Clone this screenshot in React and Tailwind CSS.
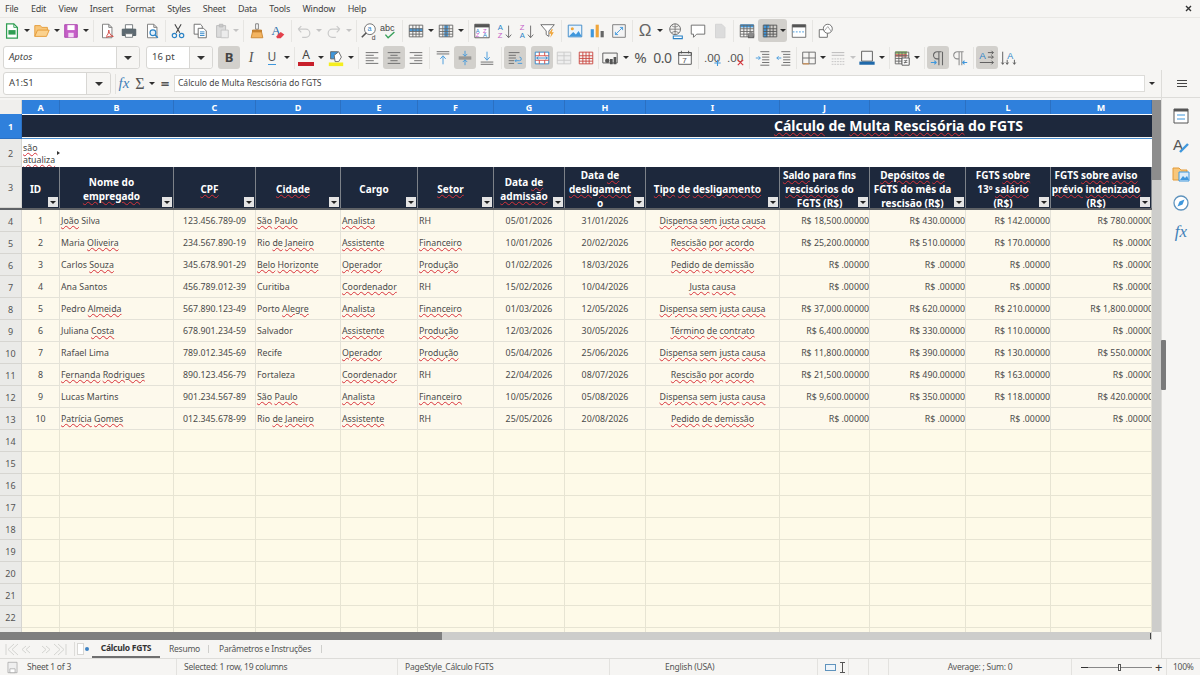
import { Fragment } from "react";

const GRID = "grid grid-cols-[22px_38px_114px_82px_85px_77px_76px_71px_81px_134px_90px_96px_85px_101px]";
const WAVY = "underline decoration-wavy decoration-[#d8323a] decoration-1 underline-offset-1";

const MENUS = ["File", "Edit", "View", "Insert", "Format", "Styles", "Sheet", "Data", "Tools", "Window", "Help"];
const COLS = ["A", "B", "C", "D", "E", "F", "G", "H", "I", "J", "K", "L", "M"];

const HEADERS = [
  ["ID"],
  ["Nome do", "~empregado"],
  ["~CPF"],
  ["~Cidade"],
  ["Cargo"],
  ["~Setor"],
  ["Data ~de", "~admissão"],
  ["Data ~de", "~desligament", "o"],
  ["~Tipo ~de ~desligamento"],
  ["~Saldo para fins", "~rescisórios do", "FGTS (R$)"],
  ["~Depósitos ~de", "FGTS do mês da", "~rescisão (R$)"],
  ["FGTS ~sobre", "13º ~salário", "(R$)"],
  ["FGTS ~sobre ~aviso", "~prévio ~indenizado", "(R$)"],
];

const ROWS = [
  [1, "~João Silva", "123.456.789-09", "~São ~Paulo", "~Analista", "RH", "05/01/2026", "31/01/2026", "~Dispensa ~sem ~justa ~causa", "18,500", "430", "142", "780"],
  [2, "Maria ~Oliveira", "234.567.890-19", "Rio ~de ~Janeiro", "~Assistente", "~Financeiro", "10/01/2026", "20/02/2026", "~Rescisão ~por ~acordo", "25,200", "510", "170", ""],
  [3, "Carlos ~Souza", "345.678.901-29", "~Belo ~Horizonte", "~Operador", "~Produção", "01/02/2026", "18/03/2026", "~Pedido ~de ~demissão", "", "", "", ""],
  [4, "Ana Santos", "456.789.012-39", "Curitiba", "~Coordenador", "RH", "15/02/2026", "10/04/2026", "~Justa ~causa", "", "", "", ""],
  [5, "Pedro ~Almeida", "567.890.123-49", "Porto ~Alegre", "~Analista", "~Financeiro", "01/03/2026", "12/05/2026", "~Dispensa ~sem ~justa ~causa", "37,000", "620", "210", "1,800"],
  [6, "Juliana ~Costa", "678.901.234-59", "Salvador", "~Assistente", "~Produção", "12/03/2026", "30/05/2026", "~Término ~de ~contrato", "6,400", "330", "110", ""],
  [7, "Rafael Lima", "789.012.345-69", "Recife", "~Operador", "~Produção", "05/04/2026", "25/06/2026", "~Dispensa ~sem ~justa ~causa", "11,800", "390", "130", "550"],
  [8, "~Fernanda ~Rodrigues", "890.123.456-79", "Fortaleza", "~Coordenador", "RH", "22/04/2026", "08/07/2026", "~Rescisão ~por ~acordo", "21,500", "490", "163", ""],
  [9, "Lucas Martins", "901.234.567-89", "~São ~Paulo", "~Analista", "~Financeiro", "10/05/2026", "05/08/2026", "~Dispensa ~sem ~justa ~causa", "9,600", "350", "118", "420"],
  [10, "~Patrícia ~Gomes", "012.345.678-99", "Rio ~de ~Janeiro", "~Assistente", "RH", "25/05/2026", "20/08/2026", "~Pedido ~de ~demissão", "", "", "", ""],
];

const EMPTY_ROWS = [14, 15, 16, 17, 18, 19, 20, 21, 22, ""];

// words starting with ~ get the spell check squiggle
function Spell({ text }) {
  return text.split(" ").map((word, i) => (
    <Fragment key={i}>
      {i > 0 && " "}
      {word.startsWith("~") ? <span className={WAVY}>{word.slice(1)}</span> : word}
    </Fragment>
  ));
}

function Svg({ children, size = 18 }) {
  return (
    <svg width={size} height={size} viewBox="0 0 20 20" fill="none" strokeWidth="1">
      {children}
    </svg>
  );
}

function Tool({ className = "w-[22px]", active, children }) {
  return (
    <div className={`flex h-[23px] shrink-0 items-center justify-center rounded-[3px] ${active ? "bg-[#d2d0cc]" : ""} ${className}`}>
      {children}
    </div>
  );
}

function Arrow({ className = "w-[10px]", faded }) {
  return (
    <div className={`flex h-[23px] shrink-0 items-center justify-center ${className}`}>
      <div className={`h-0 w-0 border-x-[3px] border-t-[3px] border-x-transparent ${faded ? "border-t-[#c4c4c4]" : "border-t-[#2e2e2e]"}`} />
    </div>
  );
}

function Sep({ className = "w-[5px]" }) {
  return (
    <div className={`flex h-[22px] shrink-0 justify-center ${className}`}>
      <div className="h-full w-px bg-[#e6e5e2]" />
    </div>
  );
}

const Doc = ({ stroke = "#777" }) => <path d="M5 2.5h7l3.5 3.5v11.5H5zM12 2.5V6h3.5" stroke={stroke} fill="#fff" />;

const GridBase = ({ stroke = "#666" }) => (
  <path d="M2.5 3.5h15v13h-15zM2.5 7.5h15M2.5 10.5h15M2.5 13.5h15M6.5 3.5v13M10 3.5v13M13.5 3.5v13" stroke={stroke} />
);

function Lines({ rows, stroke = "#666" }) {
  return <path d={rows.map(([a, b, y]) => `M${a} ${y}H${b}`).join("")} stroke={stroke} />;
}

function Toolbar1() {
  return (
    <div className="mb-[2px] flex h-[25px] items-center pl-px">
      <Tool>
        <Svg>
          <path d="M4 2h8l4 4v12H4z" fill="#fff" stroke="#2f9e52" strokeWidth="1.4" />
          <path d="M6 9h8v5H6z" fill="#2f9e52" />
          <path d="M12 2v4h4" stroke="#2f9e52" />
        </Svg>
      </Tool>
      <Arrow className="w-[8px]" />
      <Tool>
        <Svg>
          <path d="M2 16V4h6l2 2h6v3" fill="#f8c77b" stroke="#e49a37" />
          <path d="M2 16l3-7h13l-3 7z" fill="#fbd28f" stroke="#e49a37" />
        </Svg>
      </Tool>
      <Arrow className="w-[8px]" />
      <Tool className="w-[20px]">
        <Svg>
          <path d="M3 3h14v14H3z" fill="#c55ec7" stroke="#a941ab" />
          <path d="M6 3.5h8V9H6z" fill="#fff" />
          <path d="M7 12h6v5H7z" fill="#f3d9f3" />
        </Svg>
      </Tool>
      <Arrow />
      <Sep className="w-[4px]" />
      <div className="w-px" />
      <Tool>
        <Svg>
          <Doc />
          <path d="M9 16c2-1 3-5 3-7 0 3 2 6 5 7-3-.5-5 0-8 1" stroke="#cf3b35" />
        </Svg>
      </Tool>
      <Tool>
        <Svg>
          <path d="M6 3h8v5H6z" fill="#fff" stroke="#6e7478" />
          <path d="M2.5 8h15v7h-15z" fill="#5d6a72" stroke="#4e5a62" />
          <path d="M6 13h8v4H6z" fill="#fff" stroke="#6e7478" />
        </Svg>
      </Tool>
      <div className="w-px" />
      <Tool>
        <Svg>
          <Doc />
          <circle cx="11" cy="12" r="3.2" fill="#e4f1fb" stroke="#2b83c6" strokeWidth="1.3" />
          <path d="M13.5 14.5l3 3" stroke="#2b83c6" strokeWidth="1.6" />
        </Svg>
      </Tool>
      <Sep className="w-[4px]" />
      <Tool>
        <Svg>
          <path d="M6.5 2.5L12 12M13.5 2.5L8 12" stroke="#444" strokeWidth="1.2" />
          <circle cx="6" cy="15" r="2.4" stroke="#2b83c6" strokeWidth="1.3" />
          <circle cx="14" cy="15" r="2.4" stroke="#2b83c6" strokeWidth="1.3" />
        </Svg>
      </Tool>
      <Tool>
        <Svg>
          <path d="M3.5 2.5h7l2 2v9h-9z" fill="#fff" stroke="#666" />
          <path d="M8 7h6l3 3v7.5H8z" fill="#fff" stroke="#666" />
          <path d="M10 11h5M10 13h5M10 15h5" stroke="#2b83c6" />
        </Svg>
      </Tool>
      <Tool>
        <Svg>
          <path d="M4 4h10v13H4z" fill="#dcdcdc" stroke="#bbb" />
          <path d="M7 2.5h4v3H7z" fill="#c8c8c8" stroke="#bbb" />
          <path d="M9 9h8v8.5H9z" fill="#ececec" stroke="#c4c4c4" />
        </Svg>
      </Tool>
      <Arrow className="w-[6px]" faded />
      <Sep className="w-[8px]" />
      <Tool className="w-[20px]">
        <Svg>
          <path d="M8.5 2h3v6h-3z" fill="#fff" stroke="#777" />
          <path d="M5 9h10v2H5z" fill="#d58a2f" stroke="#b97422" />
          <path d="M5 11h10l1.5 6.5h-13z" fill="#f3b460" stroke="#c98530" />
        </Svg>
      </Tool>
      <Tool>
        <Svg>
          <text x="2.5" y="14.5" fontSize="15" fontFamily="Liberation Serif" fill="#2d6ea8">A</text>
          <path d="M8 16l5-5 4 3-4 4H9z" fill="#e3404b" />
        </Svg>
      </Tool>
      <Sep className="w-[5px]" />
      <Tool className="w-[20px]">
        <Svg>
          <path d="M3.5 8l3.5-3.5M3.5 8L7 11.5M3.5 8H12a4.5 4.5 0 010 9H8" stroke="#c9c9c9" strokeWidth="1.3" />
        </Svg>
      </Tool>
      <Arrow className="w-[10px]" faded />
      <Tool className="w-[20px]">
        <Svg>
          <path d="M16.5 8L13 4.5M16.5 8L13 11.5M16.5 8H8a4.5 4.5 0 000 9h4" stroke="#c9c9c9" strokeWidth="1.3" />
        </Svg>
      </Tool>
      <Arrow className="w-[10px]" faded />
      <Sep className="w-[5px]" />
      <Tool className="w-[20px]">
        <Svg>
          <circle cx="11" cy="8" r="6" fill="#fff" stroke="#666" />
          <path d="M7 12l-5 5" stroke="#555" strokeWidth="1.8" />
          <text x="8.2" y="10.5" fontSize="8" fontFamily="Liberation Sans" fill="#2b83c6">a</text>
          <text x="13" y="19.5" fontSize="7.5" fontFamily="Liberation Sans" fill="#444">d</text>
        </Svg>
      </Tool>
      <Tool className="w-[20px]">
        <Svg>
          <text x="0" y="10" fontSize="10" fontFamily="Liberation Sans" fill="#444">abc</text>
          <path d="M6 14l3 3.5L16 11" stroke="#37a05a" strokeWidth="1.5" />
        </Svg>
      </Tool>
      <Sep className="w-[6px]" />
      <Tool>
        <Svg>
          <path d="M2.5 7h15v3.5h-15z" fill="#4a9ee0" />
          <GridBase />
        </Svg>
      </Tool>
      <Arrow className="w-[8px]" />
      <Tool>
        <Svg>
          <path d="M8 3.5h4.5v13H8z" fill="#4a9ee0" />
          <GridBase />
        </Svg>
      </Tool>
      <Arrow className="w-[8px]" />
      <Sep className="w-[6px]" />
      <Tool>
        <Svg>
          <path d="M2 2.5h16v15H2z" fill="#fff" stroke="#555" />
          <path d="M2 2.5h16V6H2z" fill="#555" />
          <text x="3" y="12" fontSize="6.5" fontFamily="Liberation Sans" fill="#2b83c6">A</text>
          <text x="3" y="17" fontSize="6.5" fontFamily="Liberation Sans" fill="#c55ec7">Z</text>
          <text x="11" y="12" fontSize="6.5" fontFamily="Liberation Sans" fill="#c55ec7">Z</text>
          <text x="11" y="17" fontSize="6.5" fontFamily="Liberation Sans" fill="#2b83c6">A</text>
        </Svg>
      </Tool>
      <div className="w-px" />
      <Tool>
        <Svg>
          <text x="2" y="9" fontSize="8.5" fontFamily="Liberation Sans" fill="#2b83c6">A</text>
          <text x="2" y="18" fontSize="8.5" fontFamily="Liberation Sans" fill="#c55ec7">Z</text>
          <path d="M14 4v13M11 14l3 3.5 3-3.5" stroke="#666" />
        </Svg>
      </Tool>
      <Tool>
        <Svg>
          <text x="2" y="9" fontSize="8.5" fontFamily="Liberation Sans" fill="#c55ec7">Z</text>
          <text x="2" y="18" fontSize="8.5" fontFamily="Liberation Sans" fill="#2b83c6">A</text>
          <path d="M14 4v13M11 14l3 3.5 3-3.5" stroke="#666" />
        </Svg>
      </Tool>
      <Tool className="w-[20px]">
        <Svg>
          <path d="M2 3h15l-6 7v6l-3-2v-4z" fill="#fff" stroke="#666" />
          <path d="M14 8l-3 5h2.5l-1 4.5 4-6H14l1.5-3.5z" fill="#efa53a" />
        </Svg>
      </Tool>
      <Sep className="w-[6px]" />
      <Tool>
        <Svg>
          <path d="M2.5 3.5h15v13h-15z" fill="#eaf4fc" stroke="#3b86c4" />
          <circle cx="7" cy="7.5" r="1.7" fill="#efa53a" />
          <path d="M3 16l5-5 3 3 3-4 3.5 6z" fill="#3f97dc" />
        </Svg>
      </Tool>
      <Tool>
        <Svg>
          <path d="M3 8h3.5v9H3z" fill="#3f97dc" />
          <path d="M8.5 3H12v14H8.5z" fill="#efa53a" />
          <path d="M14 10h3.5v7H14z" fill="#666" />
        </Svg>
      </Tool>
      <Tool>
        <Svg>
          <path d="M3 3h14v14H3z" fill="#f4f4f4" stroke="#777" />
          <path d="M6 14l8-8M11 6h3v3M9 14H6v-3" stroke="#3f97dc" />
        </Svg>
      </Tool>
      <Sep className="w-[5px]" />
      <Tool className="w-[20px]">
        <span className="font-['Liberation_Sans',sans-serif] text-[17px] leading-none text-[#666]">Ω</span>
      </Tool>
      <Arrow className="w-[10px]" />
      <Tool>
        <Svg>
          <circle cx="9" cy="8" r="6" stroke="#666" />
          <path d="M3 8h12M9 2v12M5 4c3 2 5 2 8 0M5 12c3-2 5-2 8 0" stroke="#666" strokeWidth=".8" />
          <path d="M7 15.5h10v3H7z" fill="#fff" stroke="#2b83c6" strokeWidth="1.2" />
        </Svg>
      </Tool>
      <Tool>
        <Svg>
          <path d="M2.5 3.5h15v10h-9L5 17v-3.5H2.5z" fill="#fff" stroke="#666" />
        </Svg>
      </Tool>
      <Tool>
        <Svg>
          <path d="M5 2.5h7l3.5 3.5v11.5H5z" fill="#dcdcdc" stroke="#d2d2d2" />
        </Svg>
      </Tool>
      <Sep className="w-[5px]" />
      <Tool>
        <Svg>
          <path d="M2.5 2.5h15V6h-15z" fill="#3f97dc" />
          <GridBase />
          <path d="M11 13h7v5h-7z" fill="#666" />
          <circle cx="14.5" cy="14" r="3" fill="#8a8a8a" />
        </Svg>
      </Tool>
      <Tool className="w-[29px] gap-[1px] pl-[1px]" active>
        <Svg>
          <path d="M3 3h6v3.5H3zM3 6.5h4V17H3z" fill="#3f97dc" />
          <GridBase stroke="#555" />
        </Svg>
        <div className="h-0 w-0 border-x-[3px] border-t-[3px] border-x-transparent border-t-[#2e2e2e]" />
      </Tool>
      <div className="w-px" />
      <Tool>
        <Svg>
          <path d="M2.5 3h15v14h-15z" fill="#fff" stroke="#666" />
          <path d="M2.5 3h15v3h-15z" fill="#555" />
          <path d="M3 11h14" stroke="#3f97dc" strokeDasharray="2 1.5" />
        </Svg>
      </Tool>
      <Sep className="w-[5px]" />
      <Tool>
        <Svg>
          <path d="M2.5 8.5h9V17h-9z" fill="#fff" stroke="#666" />
          <circle cx="12" cy="7.5" r="5" fill="#fff" stroke="#666" />
          <path d="M8 10l4-5 3.5 5" stroke="#888" strokeWidth=".8" />
        </Svg>
      </Tool>
    </div>
  );
}

function ComboBox({ className, text, italic, arrowClass }) {
  return (
    <div className={`flex h-[23px] shrink-0 items-center rounded-[3px] border border-[#d8d7d4] bg-white ${className}`}>
      <span className={`flex-1 pl-[5px] text-[9.5px] text-[#444] ${italic ? "italic" : ""}`}>{text}</span>
      <div className={`flex h-full items-center justify-center rounded-r-[3px] border-l border-[#d8d7d4] bg-[#f6f5f3] ${arrowClass}`}>
        <div className="h-0 w-0 border-x-[4px] border-t-[4px] border-x-transparent border-t-[#333]" />
      </div>
    </div>
  );
}

function Toolbar2() {
  return (
    <div className="flex h-[25px] items-center pl-[3px]">
      <ComboBox className="w-[137px]" text="Aptos" italic arrowClass="w-[23px]" />
      <div className="w-[6px] shrink-0" />
      <ComboBox className="w-[67px]" text="16 pt" arrowClass="w-[23px]" />
      <div className="w-[5px] shrink-0" />
      <Tool active className="w-[22px] text-[13px] font-bold text-[#444]">B</Tool>
      <Tool className="w-[22px] font-['Liberation_Serif',serif] text-[14px] italic text-[#555]">I</Tool>
      <Tool className="w-[20px]">
        <span className="border-b border-[#3f97dc] text-[12px] leading-[14px] text-[#555]">U</span>
      </Tool>
      <Arrow className="w-[10px]" />
      <Sep className="w-[4px]" />
      <Tool className="w-[20px]">
        <div className="flex flex-col items-center">
          <span className="text-[12px] leading-[12px] text-[#444]">A</span>
          <div className="mt-px h-[4px] w-[16px] bg-[#c8202b]" />
        </div>
      </Tool>
      <Arrow className="w-[9px]" />
      <Tool className="w-[21px]">
        <Svg>
          <path d="M4 3h8v8H4z" fill="#3f97dc" stroke="#666" />
          <path d="M8 7l5-4 3 6-3 5H9z" fill="#fff" stroke="#666" />
          <path d="M2 15h16v4H2z" fill="#f5ee1f" />
        </Svg>
      </Tool>
      <Arrow className="w-[9px]" />
      <Sep className="w-[6px]" />
      <Tool><Svg><Lines rows={[[3, 17, 4], [3, 12, 7], [3, 17, 10], [3, 12, 13], [3, 17, 16]]} /></Svg></Tool>
      <Tool active><Svg><Lines rows={[[3, 17, 4], [6, 14, 7], [3, 17, 10], [6, 14, 13], [3, 17, 16]]} /></Svg></Tool>
      <Tool><Svg><Lines rows={[[3, 17, 4], [8, 17, 7], [3, 17, 10], [8, 17, 13], [3, 17, 16]]} /></Svg></Tool>
      <Sep className="w-[5px]" />
      <Tool>
        <Svg>
          <Lines rows={[[3, 17, 3], [3, 17, 5.5]]} />
          <path d="M10 17V8M7 11l3-3.5 3 3.5" stroke="#3f97dc" />
        </Svg>
      </Tool>
      <Tool active>
        <Svg>
          <Lines rows={[[3, 17, 9], [3, 17, 11]]} />
          <path d="M10 2v6M7.5 5.5L10 8l2.5-2.5M10 18v-6M7.5 14.5L10 12l2.5 2.5" stroke="#3f97dc" />
        </Svg>
      </Tool>
      <Tool>
        <Svg>
          <Lines rows={[[3, 17, 14.5], [3, 17, 17]]} />
          <path d="M10 3v9M7 9l3 3.5L13 9" stroke="#3f97dc" />
        </Svg>
      </Tool>
      <Sep className="w-[6px]" />
      <Tool active>
        <Svg>
          <Lines rows={[[3, 15, 4], [3, 11, 7], [3, 11, 10], [3, 9, 13], [3, 9, 16]]} />
          <path d="M10 13h5a1.5 1.5 0 000-4M10 13l1.5-1.5M10 13l1.5 1.5M13 16h5" stroke="#3f97dc" />
        </Svg>
      </Tool>
      <div className="w-[5px] shrink-0" />
      <Tool active>
        <Svg>
          <path d="M2.5 3.5h15v13h-15z" fill="#fff" stroke="#2b83c6" />
          <path d="M2.5 7.5h15M2.5 12.5h15M7 3.5v4M13 3.5v4M7 12.5v4M13 12.5v4" stroke="#d4463e" />
          <path d="M4 10h12M4 10l2-1.5M4 10l2 1.5M16 10l-2-1.5M16 10l-2 1.5" stroke="#2b83c6" />
        </Svg>
      </Tool>
      <Tool>
        <Svg>
          <path d="M2.5 3.5h15v13h-15zM2.5 7.5h15M2.5 12.5h15M10 3.5v13" fill="#eee" stroke="#c8c8c8" />
        </Svg>
      </Tool>
      <Tool>
        <Svg>
          <GridBase stroke="#c8453e" />
        </Svg>
      </Tool>
      <Sep className="w-[2px]" />
      <Tool>
        <Svg>
          <path d="M2 4.5h16v11H2z" stroke="#555" />
          <circle cx="7" cy="13" r="2.5" fill="#555" />
          <path d="M10 11h3v6h-3zM14 9h3v8h-3z" fill="#555" />
        </Svg>
      </Tool>
      <Arrow className="w-[9px]" />
      <Tool className="w-[21px] text-[15px] text-[#555]">%</Tool>
      <Tool className="w-[23px] text-[14px] tracking-[-0.5px] text-[#555]">0.0</Tool>
      <Tool>
        <Svg>
          <path d="M3 4h14v13H3z" fill="#fff" stroke="#555" />
          <path d="M3 4h14v3H3zM6 2v3M14 2v3" stroke="#555" />
          <text x="7" y="15" fontSize="9" fontFamily="Liberation Sans" fill="#555">7</text>
        </Svg>
      </Tool>
      <Sep className="w-[5px]" />
      <Tool className="w-[23px]">
        <Svg>
          <text x="0" y="14" fontSize="13" fontFamily="Liberation Sans" fill="#555">.00</text>
          <path d="M15 12v7M11.5 15.5h7" stroke="#3f97dc" strokeWidth="1.2" />
        </Svg>
      </Tool>
      <Tool className="w-[23px]">
        <Svg>
          <text x="0" y="14" fontSize="13" fontFamily="Liberation Sans" fill="#555">.00</text>
          <path d="M12 12l6 6M18 12l-6 6" stroke="#d8323a" strokeWidth="1.2" />
        </Svg>
      </Tool>
      <Sep className="w-[5px]" />
      <Tool className="w-[21px]">
        <Svg>
          <Lines rows={[[7, 17, 3], [9, 17, 6], [9, 17, 9], [9, 17, 12], [9, 17, 15], [7, 17, 18]]} />
          <path d="M2 10h5M5 8l2 2-2 2" stroke="#3f97dc" />
        </Svg>
      </Tool>
      <Tool className="w-[21px]">
        <Svg>
          <Lines rows={[[7, 17, 3], [9, 17, 6], [9, 17, 9], [9, 17, 12], [9, 17, 15], [7, 17, 18]]} />
          <path d="M2 10h5M4 8l-2 2 2 2" stroke="#3f97dc" />
        </Svg>
      </Tool>
      <Sep className="w-[5px]" />
      <Tool className="w-[19px]">
        <Svg>
          <path d="M3 3.5h14v13H3zM10 3.5v13M3 10h14" stroke="#666" />
          <path d="M3 16.5h7" stroke="#e08a3a" />
        </Svg>
      </Tool>
      <Arrow className="w-[10px]" />
      <Tool className="w-[20px]">
        <Svg>
          <Lines rows={[[3, 17, 4], [3, 17, 7]]} stroke="#b5b5b5" />
          <path d="M3 11h14M3 14h14M3 17h14" stroke="#c2c2c2" strokeDasharray="2 1" />
        </Svg>
      </Tool>
      <Arrow className="w-[9px]" faded />
      <Tool className="w-[20px]">
        <Svg>
          <path d="M4 2.5h12v11H4z" fill="#f7f7f7" stroke="#555" />
          <path d="M1.5 14h17v3.5h-17z" fill="#1f69aa" />
        </Svg>
      </Tool>
      <Arrow className="w-[9px]" />
      <Sep className="w-[6px]" />
      <Tool className="w-[20px]">
        <Svg>
          <path d="M2.5 2.5h13v3h-13z" fill="#8cc46a" />
          <path d="M2.5 5.5h13v3h-13z" fill="#e47a6d" />
          <GridBase />
          <path d="M10 10h8v8h-8z" fill="#fff" stroke="#555" />
          <path d="M12 13h4M12 15h4M15 12l-2 4" stroke="#555" strokeWidth=".8" />
        </Svg>
      </Tool>
      <Arrow className="w-[10px]" />
      <Sep className="w-[5px]" />
      <Tool active>
        <Svg>
          <path d="M14 3H9a4 4 0 000 8h2M11 3v15M15 3v15" stroke="#666" strokeWidth="1.2" />
          <path d="M2 15h6M6 13l2 2-2 2" stroke="#3f97dc" strokeWidth="1.2" />
        </Svg>
      </Tool>
      <Tool>
        <Svg>
          <path d="M14 3H7a4 4 0 000 8h2M9 3v15M12 3v15" stroke="#8f8f8f" strokeWidth="1.2" />
          <path d="M18 15h-5M15 13l-2 2 2 2" stroke="#3f97dc" strokeWidth="1.2" />
        </Svg>
      </Tool>
      <Sep className="w-[5px]" />
      <Tool active>
        <Svg>
          <text x="1.5" y="11" fontSize="11" fontFamily="Liberation Sans" fill="#2b83c6">A</text>
          <path d="M11 4h6M15 2l2 2-2 2M11 9h6M15 7l2 2-2 2M2 15h15M15 13l2 2-2 2" stroke="#555" />
        </Svg>
      </Tool>
      <Tool>
        <Svg>
          <text x="8" y="11" fontSize="10" fontFamily="Liberation Sans" fill="#2b83c6">A</text>
          <path d="M3 3v14M1.5 15L3 17l1.5-2M8 12v5M6.5 15L8 17l1.5-2M16 12v5M14.5 15l1.5 2 1.5-2" stroke="#555" />
        </Svg>
      </Tool>
    </div>
  );
}

function FormulaBar() {
  return (
    <div className="flex h-[28px] items-center border-b border-[#dddcd9] pl-[3px]">
      <ComboBox className="w-[108px]" text="A1:S1" arrowClass="w-[24px]" />
      <div className="ml-[4px] h-[20px] w-px bg-[#e3e2df]" />
      <span className="w-[16px] text-center font-['Liberation_Serif',serif] text-[15px] italic text-[#3f7fb8]">fx</span>
      <span className="w-[16px] text-center font-['Liberation_Serif',serif] text-[16px] text-[#555]">Σ</span>
      <Arrow className="w-[8px]" />
      <span className="w-[18px] text-center text-[15px] font-bold text-[#555]">=</span>
      <div className="flex h-[17px] w-[971px] items-center border border-[#dddcd9] bg-white pl-[3px] text-[8.5px] text-[#444]">
        Cálculo de Multa Rescisória do FGTS
      </div>
      <Arrow className="w-[14px]" />
      <div className="ml-[2px] h-full w-px bg-[#dddcd9]" />
      <div className="ml-[15px] flex flex-col gap-[2px]">
        <div className="h-px w-[10px] bg-[#444]" />
        <div className="h-px w-[10px] bg-[#444]" />
        <div className="h-px w-[10px] bg-[#444]" />
      </div>
    </div>
  );
}

function RowHead({ n, active }) {
  return (
    <div className={`flex items-center justify-center border-r border-b pt-[2px] text-[9px] ${active ? "border-[#2b70c2] bg-[#2f80dc] font-bold text-white" : "border-[#d6d5d1] bg-[#eaeae8] text-[#555]"}`}>
      {n}
    </div>
  );
}

function FilterButton() {
  return (
    <div className="absolute right-px bottom-px flex h-[10px] w-[10px] items-center justify-center bg-[#e4e4e4]">
      <div className="h-0 w-0 border-x-[3px] border-t-[3px] border-x-transparent border-t-[#222]" />
    </div>
  );
}

function HeaderRow() {
  return (
    <div className={`${GRID} h-[43px] border-b-2 border-[#5f6266]`}>
      <RowHead n={3} />
      {HEADERS.map((lines, i) => (
        <div key={i} className="relative flex flex-col items-center justify-center overflow-hidden border-r border-[#7c8188] bg-[#1d283c] pt-[2px] pr-[10px] text-center text-[10px] leading-[14px] font-bold whitespace-nowrap text-white">
          {lines.map((line, j) => (
            <div key={j}><Spell text={line} /></div>
          ))}
          <FilterButton />
        </div>
      ))}
    </div>
  );
}

function DataRow({ row }) {
  const [id, name, cpf, city, role, sector, start, end, type, ...money] = row;
  const cell = "flex items-center overflow-hidden whitespace-nowrap border-r border-b border-[#e4e2d8] bg-[#fdf9ec] pt-[3px] text-[8.8px] text-[#4a4a4a]";
  return (
    <div className={`${GRID} h-[22px]`}>
      <RowHead n={id + 3} />
      <div className={`${cell} justify-center`}>{id}</div>
      <div className={`${cell} pl-px`}><span><Spell text={name} /></span></div>
      <div className={`${cell} justify-center`}>{cpf}</div>
      <div className={`${cell} pl-px`}><span><Spell text={city} /></span></div>
      <div className={`${cell} pl-px`}><span><Spell text={role} /></span></div>
      <div className={`${cell} pl-px`}><span><Spell text={sector} /></span></div>
      <div className={`${cell} justify-center`}>{start}</div>
      <div className={`${cell} justify-center`}>{end}</div>
      <div className={`${cell} justify-center`}><span><Spell text={type} /></span></div>
      {money.map((value, i) => (
        <div key={i} className={`${cell} justify-end`}>
          <span className={i === 3 ? "-mr-[2px]" : ""}>R$ {value}.00000</span>
        </div>
      ))}
    </div>
  );
}

function EmptyRow({ n }) {
  return (
    <div className={`${GRID} h-[22px]`}>
      <RowHead n={n} />
      {COLS.map((c) => (
        <div key={c} className="border-r border-b border-[#e7e4d3] bg-[#fefae8]" />
      ))}
    </div>
  );
}

function Sheet() {
  return (
    <div className="h-[532px] w-[1152px] overflow-hidden">
      <div className={`${GRID} h-[14px]`}>
        <div className="border-r border-b border-[#d6d5d1] bg-[#f0efed]" />
        {COLS.map((c) => (
          <div key={c} className="flex items-center justify-center border-r border-[#2b70c2] bg-[#2f80dc] pt-px text-[9px] font-bold text-white">{c}</div>
        ))}
      </div>
      <div className="grid h-[25px] grid-cols-[22px_1130px]">
        <RowHead n={1} active />
        <div className="border-t border-white">
          <div className="h-[22px] overflow-hidden bg-[#1d283c] pl-[752px] text-[14px] leading-[22px] font-bold text-white">
            <Spell text="~Cálculo de ~Multa ~Rescisória do FGTS" />
          </div>
          <div className="mt-px h-px bg-[#4a8fd0]" />
        </div>
      </div>
      <div className="grid h-[28px] grid-cols-[22px_1130px]">
        <RowHead n={2} />
        <div className="relative overflow-hidden bg-white pt-[3px] pl-px text-[8.8px] leading-[12px] text-[#444]">
          <div><span className={WAVY}>são</span></div>
          <div><span className={WAVY}>atualiza</span></div>
          <div className="absolute top-[12px] left-[35px] h-0 w-0 border-y-[2px] border-l-[3px] border-y-transparent border-l-[#333]" />
        </div>
      </div>
      <HeaderRow />
      {ROWS.map((row) => (
        <DataRow key={row[0]} row={row} />
      ))}
      {EMPTY_ROWS.map((n, i) => (
        <EmptyRow key={i} n={n} />
      ))}
    </div>
  );
}

function TabsBar() {
  return (
    <div className="flex h-[18px] items-center text-[8.5px] tracking-[-0.25px] text-[#555]">
      <div className="flex w-[74px] items-center pl-[5px]">
        <svg width="62" height="13" viewBox="0 0 62 13" fill="none" stroke="#d5d5d2" strokeWidth="1">
          <path d="M1 1v11M9 1L3 6.5 9 12M13 1L7 6.5 13 12M25 3l-4 3.5 4 3.5M21 3l-4 3.5 4 3.5M37 3l4 3.5-4 3.5M41 3l4 3.5-4 3.5M49 1l6 5.5-6 5.5M53 1l6 5.5-6 5.5M61 1v11" />
        </svg>
      </div>
      <div className="mr-[2px] h-[14px] w-px bg-[#dddcd9]" />
      <div className="h-[12px] w-[7px] border border-[#d8d7d4] bg-white" />
      <div className="ml-px h-[4px] w-[4px] rounded-full bg-[#3f83c4]" />
      <div className="ml-[3px] flex h-full w-[68px] items-center justify-center border-b-2 border-[#6f6f6f] font-bold text-[#333]">Cálculo FGTS</div>
      <span className="ml-[9px]">Resumo</span>
      <div className="mx-[8px] h-[8px] w-px bg-[#cfcfcc]" />
      <span className="ml-[2px]">Parâmetros e Instruções</span>
      <div className="ml-[10px] h-[8px] w-px bg-[#cfcfcc]" />
    </div>
  );
}

function Sidebar() {
  return (
    <div className="relative flex w-[39px] flex-col items-center gap-[9px] border-l border-[#dddcd9] pt-[8px]">
      <Svg size={20}>
        <path d="M3 3h14v14H3z" fill="#fff" stroke="#555" />
        <path d="M3 3h14v2.5H3z" fill="#555" />
        <path d="M6 9h8M6 13h8" stroke="#3f97dc" />
      </Svg>
      <Svg size={20}>
        <text x="2" y="15" fontSize="15" fontFamily="Liberation Sans" fill="#555">A</text>
        <path d="M9 17l8-8" stroke="#3f97dc" strokeWidth="2.4" />
      </Svg>
      <Svg size={20}>
        <path d="M2 16V4h6l2 2h6v10z" fill="#f8c77b" stroke="#e49a37" />
        <path d="M8 8h10v9H8z" fill="#dcecf8" stroke="#3f97dc" />
        <path d="M9 16l3-4 2 2 2-2 2 4z" fill="#3f97dc" />
      </Svg>
      <Svg size={20}>
        <circle cx="10" cy="10" r="7" fill="#fff" stroke="#5f93bd" strokeWidth="1.3" />
        <path d="M13.5 6.5l-2 5-5 2 2-5z" fill="#3f97dc" />
      </Svg>
      <span className="font-['Liberation_Serif',serif] text-[17px] leading-[20px] italic text-[#3f7fb8]">fx</span>
      <div className="absolute top-[242px] -left-px h-[50px] w-[5px] rounded-[1px] bg-[#7a7a7a]" />
    </div>
  );
}

function StatusBar() {
  const cell = "flex h-full shrink-0 items-center border-r border-[#e3e2df]";
  return (
    <div className="flex h-[17px] items-center border-t border-[#dddcd9] text-[8.5px] tracking-[-0.25px] text-[#555]">
      <div className={`${cell} w-[177px] pl-[6px]`}>
        <Svg size={13}>
          <path d="M3 2h14v16H3z" fill="#efefef" stroke="#9a9a9a" />
          <path d="M6 12h8v6H6z" fill="#fff" stroke="#9a9a9a" />
        </Svg>
        <span className="ml-[8px]">Sheet 1 of 3</span>
      </div>
      <div className={`${cell} w-[221px] pl-[7px]`}>Selected: 1 row, 19 columns</div>
      <div className={`${cell} w-[212px] pl-[7px]`}>PageStyle_Cálculo FGTS</div>
      <div className={`${cell} w-[208px] pl-[55px]`}>English (USA)</div>
      <div className={`${cell} w-[31px] justify-end gap-[4px] pr-[3px]`}>
        <div className="h-[7px] w-[11px] border border-[#5f93bd] bg-[#eef5fb]" />
        <svg width="5" height="11" viewBox="0 0 5 11" fill="none" stroke="#555" strokeWidth="1">
          <path d="M0 .5h5M0 10.5h5M2.5 .5v10" />
        </svg>
      </div>
      <div className={`${cell} w-[20px]`} />
      <div className={`${cell} w-[20px]`} />
      <div className={`${cell} w-[183px] justify-center`}>Average: ; Sum: 0</div>
      <div className="flex w-[94px] shrink-0 items-center pl-[9px]">
        <div className="h-[1px] w-[7px] bg-[#333]" />
        <div className="relative h-px w-[64px] bg-[#888]">
          <div className="absolute -top-[3px] left-[30px] h-[7px] w-[3px] border border-[#555] bg-white" />
        </div>
        <div className="ml-[3px] text-[13px] leading-none text-[#333]">+</div>
      </div>
      <div className="h-full border-l border-[#e3e2df] pl-[6px] leading-[16px]">100%</div>
    </div>
  );
}

export default function App() {
  return (
    <div className="flex h-[675px] w-[1200px] flex-col overflow-hidden bg-[#f6f5f3] font-['Noto_Sans','Open_Sans',sans-serif]">
      <div className="flex h-[18px] items-center gap-[12.5px] border-b border-[#e9e8e5] pl-[5px] text-[9px] tracking-[-0.25px] text-[#444]">
        {MENUS.map((m) => (
          <span key={m}>{m}</span>
        ))}
        <svg className="ml-auto mr-[8px]" width="7" height="7" viewBox="0 0 7 7" fill="none" stroke="#333" strokeWidth="1.4">
          <path d="M1 1l5 5M6 1L1 6" />
        </svg>
      </div>
      <Toolbar1 />
      <Toolbar2 />
      <FormulaBar />
      <div className="flex flex-1 overflow-hidden">
        <div className="flex w-[1161px] flex-col pt-[2px]">
          <div className="flex">
            <Sheet />
            <div className="w-[9px] bg-[#cdcdcb]">
              <div className="h-[80px] w-full bg-[#8d8d8d]" />
            </div>
          </div>
          <div className="relative mr-[9px] h-[8px] bg-[#cdcdcb]">
            <div className="h-full w-[442px] bg-[#7f7f7f]" />
            <div className="absolute top-[1px] right-[1px] h-[6px] w-px bg-[#444]" />
          </div>
          <TabsBar />
        </div>
        <Sidebar />
      </div>
      <StatusBar />
    </div>
  );
}
